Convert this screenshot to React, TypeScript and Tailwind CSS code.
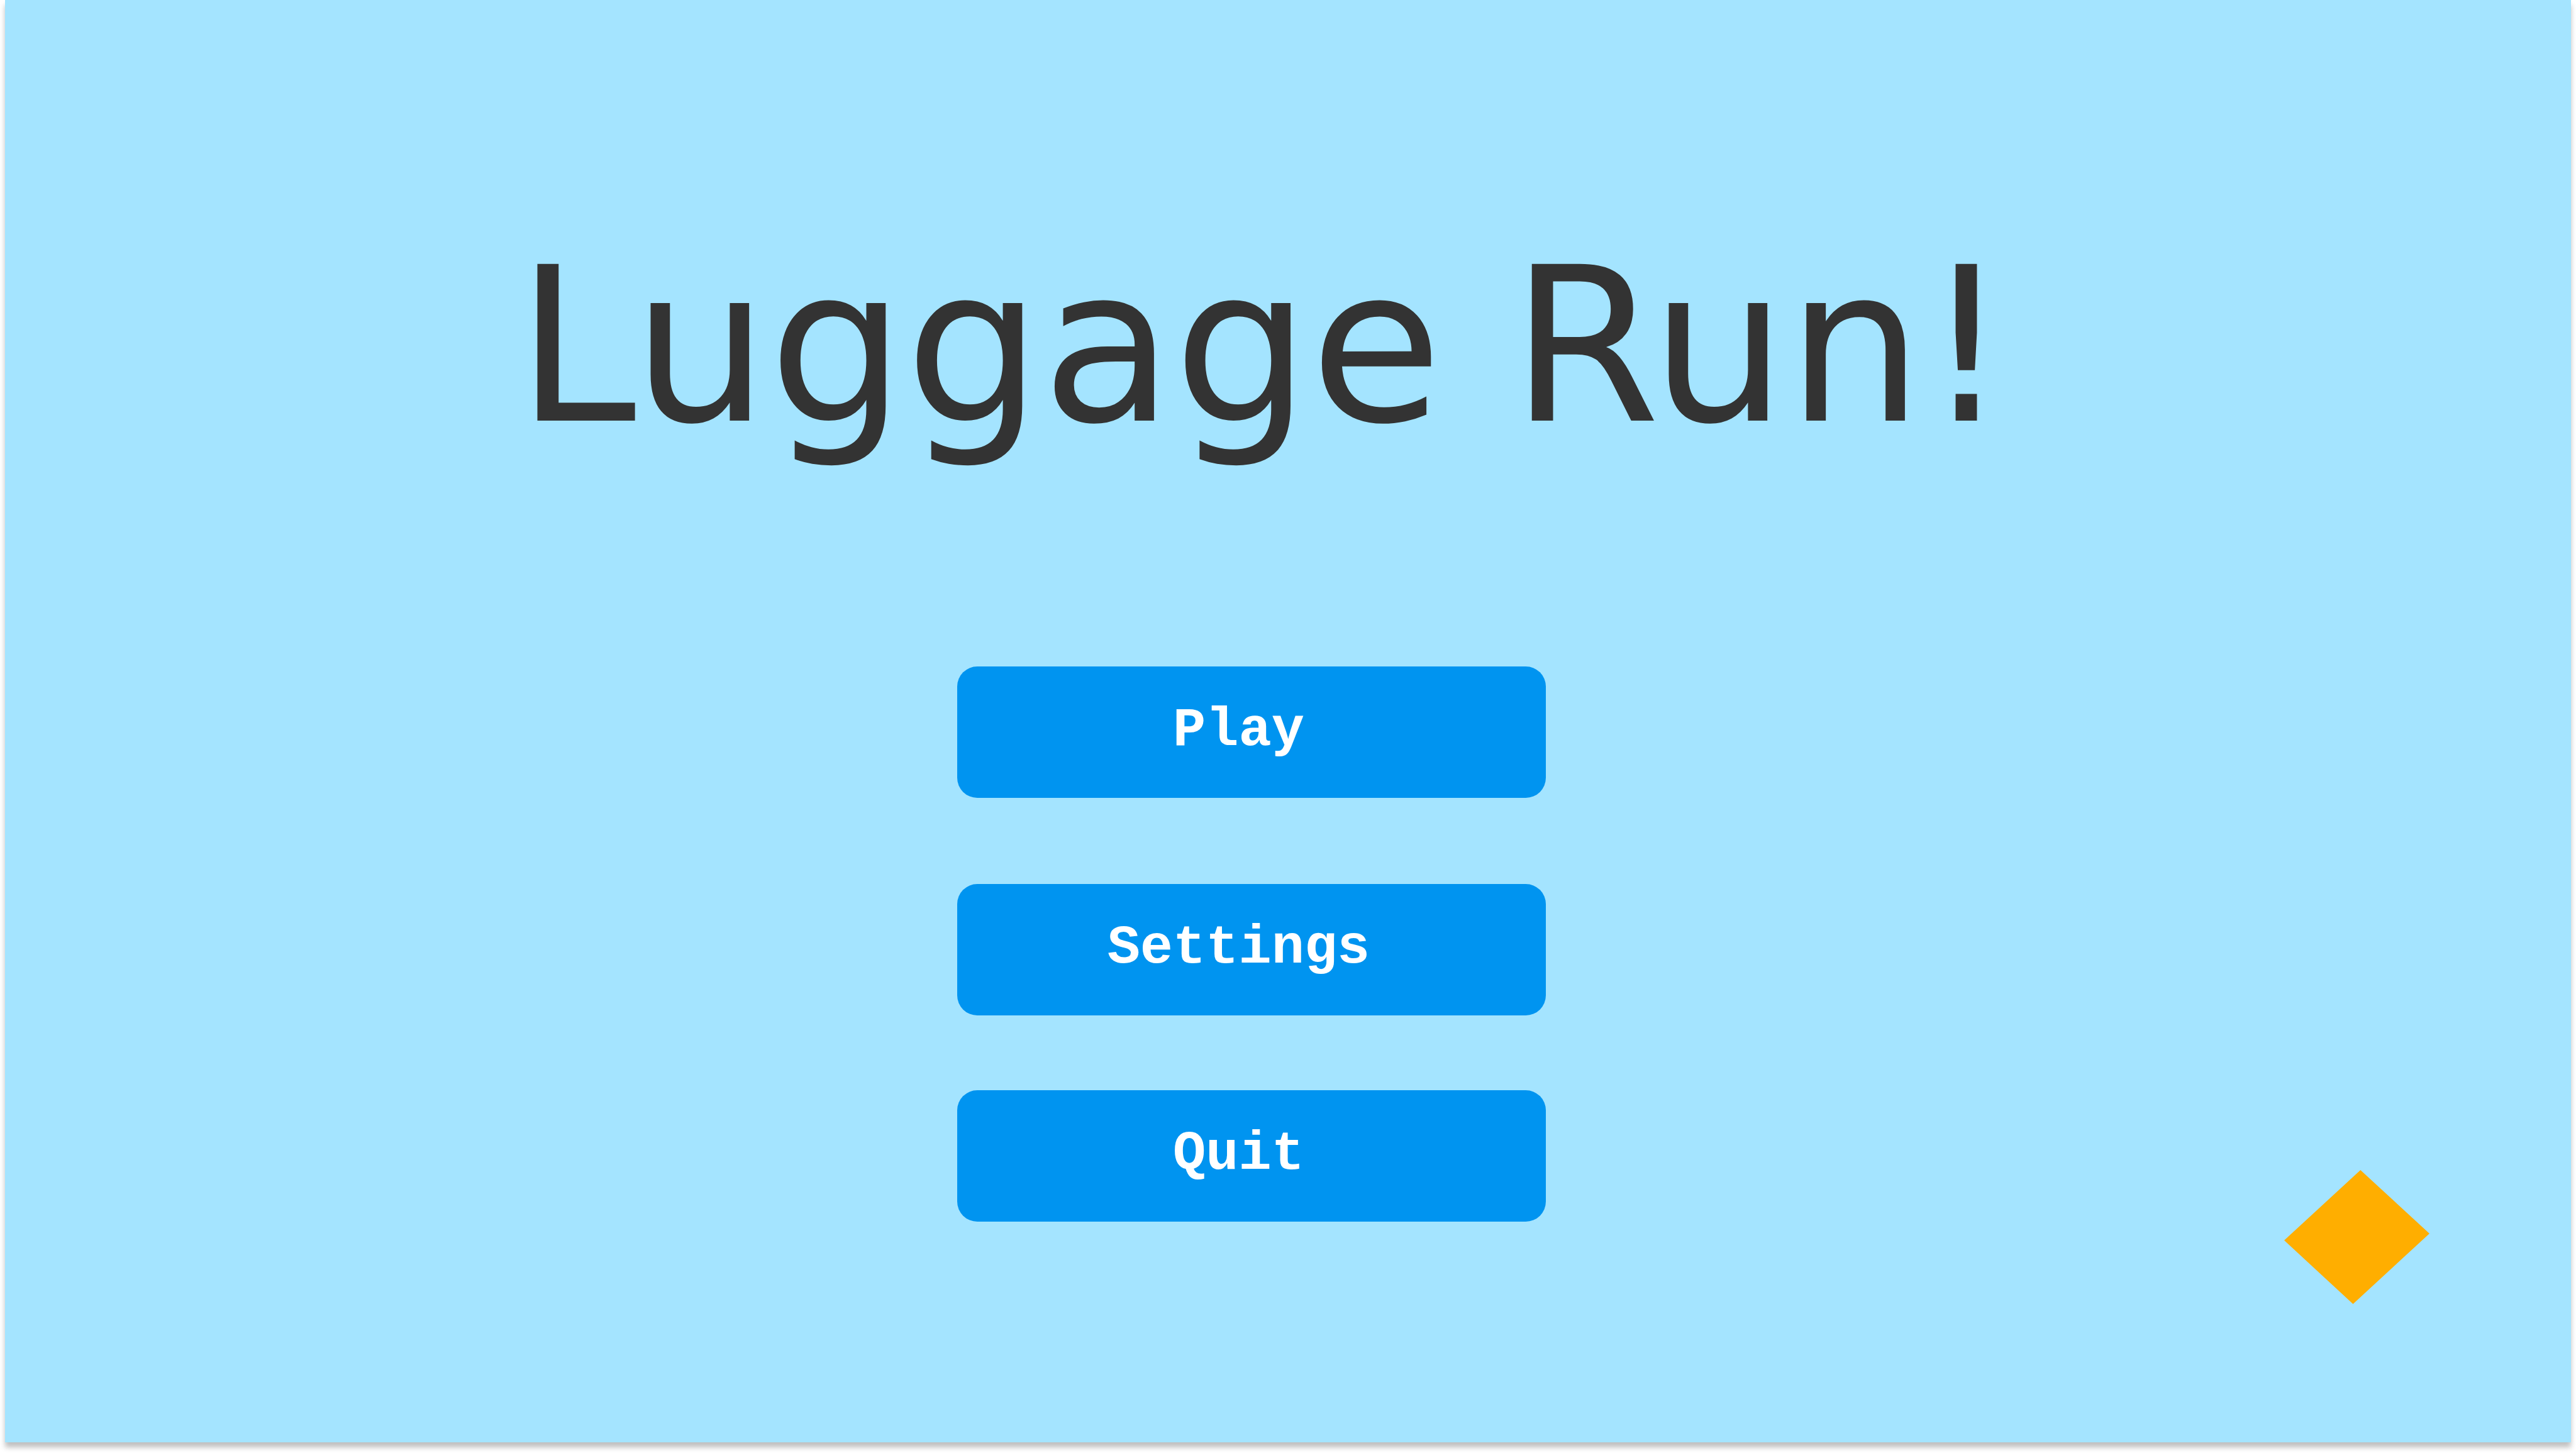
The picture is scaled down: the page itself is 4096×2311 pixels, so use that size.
type MenuButtonProps = { label: string };

function MenuButton({ label }: MenuButtonProps) {
  return (
    <button
      type="button"
      className="flex h-[209px] w-[936px] cursor-pointer items-center justify-center rounded-4xl bg-[#0094f0] pr-10 pb-1 font-['Liberation_Mono',monospace] text-[87px] leading-none font-bold text-white"
    >
      {label}
    </button>
  );
}

function Luggage() {
  return (
    <svg viewBox="0 0 977 901" className="h-[213px] w-[231px]" aria-hidden="true">
      <polygon points="513,0 977,427 463,901 0,473" fill="#ffae00" />
    </svg>
  );
}

export default function App() {
  return (
    <div className="flex min-h-screen flex-col bg-white px-2 pb-[17px]">
      <main className="flex flex-1 flex-col bg-[#a4e4ff] pt-[383px] shadow-[0_8px_8px_rgba(0,0,0,0.25)]">
        <h1 className="pr-20 text-center font-['DejaVu_Sans',sans-serif] text-[342px] leading-[336px] whitespace-nowrap text-[#333333]">
          Luggage Run!
        </h1>
        <div className="mt-[341px] flex pr-[117px]">
          <div className="flex-1" />
          <nav aria-label="Main menu" className="flex flex-col pb-[131px]">
            <MenuButton label="Play" />
            <div className="mt-[137px] flex flex-col gap-[119px]">
              <MenuButton label="Settings" />
              <MenuButton label="Quit" />
            </div>
          </nav>
          <div className="flex flex-1 items-end justify-end">
            <div className="pr-[108px]">
              <Luggage />
            </div>
          </div>
        </div>
      </main>
    </div>
  );
}
